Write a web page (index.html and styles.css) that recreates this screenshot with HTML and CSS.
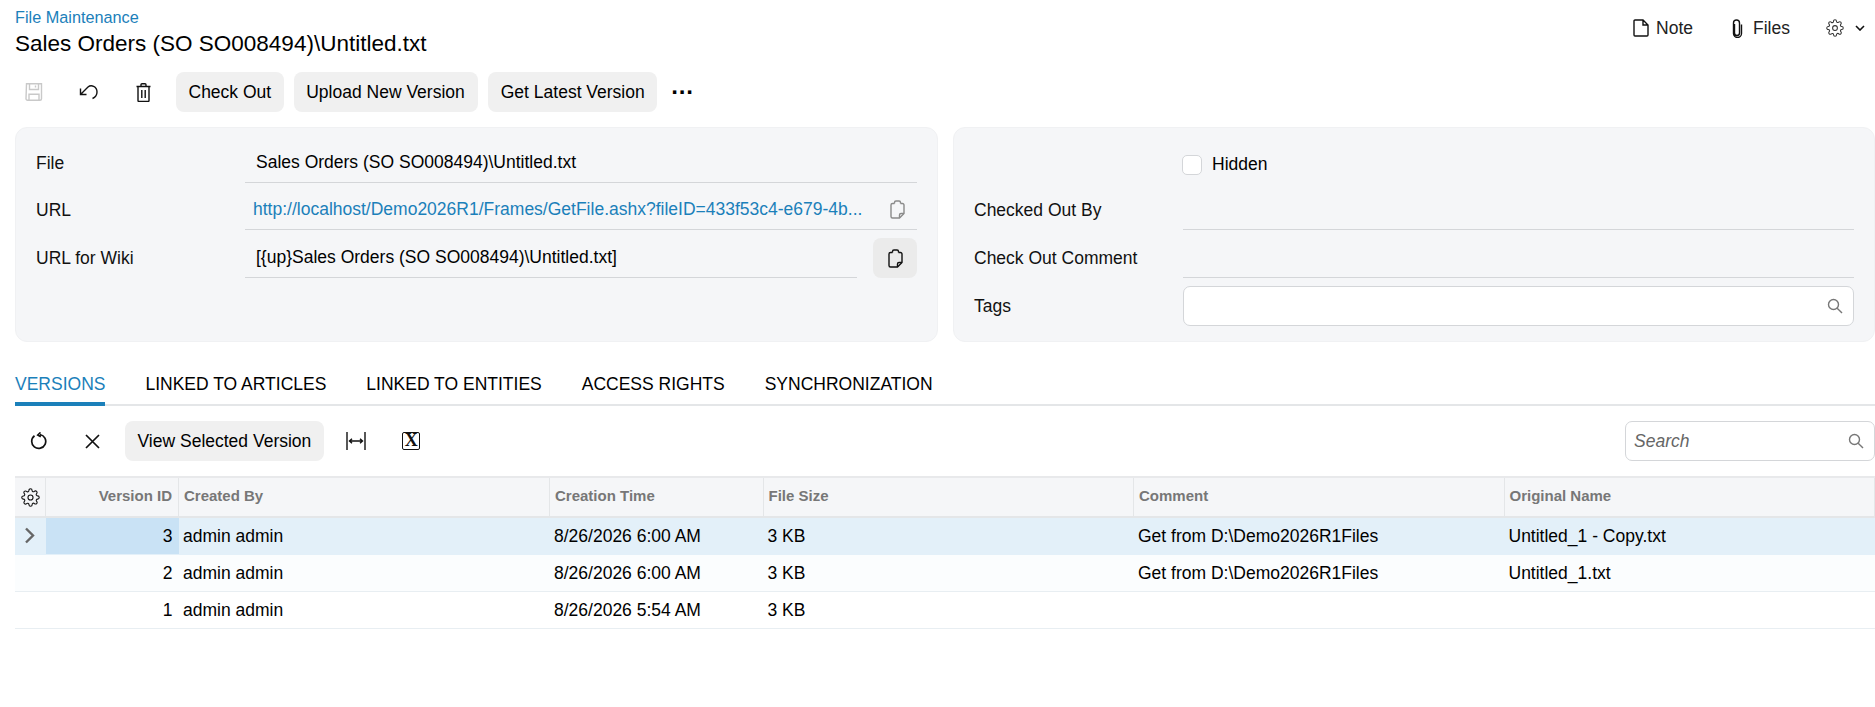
FILE: index.html
```html
<!DOCTYPE html>
<html lang="en">
<head>
  <meta charset="UTF-8">
  <title>File Maintenance</title>
  <link rel="stylesheet" href="styles.css">
</head>
<body>
  <svg class="defs" width="0" height="0">
    <symbol id="gear" viewBox="0 0 24 24">
      <circle cx="12" cy="12" r="3.2"/>
      <path d="M19.4 15a1.65 1.65 0 0 0 .33 1.82l.06.06a2 2 0 0 1 0 2.83 2 2 0 0 1-2.83 0l-.06-.06a1.65 1.65 0 0 0-1.82-.33 1.65 1.65 0 0 0-1 1.51V21a2 2 0 0 1-2 2 2 2 0 0 1-2-2v-.09A1.65 1.65 0 0 0 9 19.4a1.65 1.65 0 0 0-1.82.33l-.06.06a2 2 0 0 1-2.83 0 2 2 0 0 1 0-2.83l.06-.06a1.65 1.65 0 0 0 .33-1.82 1.65 1.65 0 0 0-1.51-1H3a2 2 0 0 1-2-2 2 2 0 0 1 2-2h.09A1.65 1.65 0 0 0 4.6 9a1.65 1.65 0 0 0-.33-1.82l-.06-.06a2 2 0 0 1 0-2.83 2 2 0 0 1 2.83 0l.06.06a1.65 1.65 0 0 0 1.82.33H9a1.65 1.65 0 0 0 1-1.51V3a2 2 0 0 1 2-2 2 2 0 0 1 2 2v.09a1.65 1.65 0 0 0 1 1.51 1.65 1.65 0 0 0 1.82-.33l.06-.06a2 2 0 0 1 2.83 0 2 2 0 0 1 0 2.83l-.06.06a1.65 1.65 0 0 0-.33 1.82V9a1.65 1.65 0 0 0 1.51 1H21a2 2 0 0 1 2 2 2 2 0 0 1-2 2h-.09a1.65 1.65 0 0 0-1.51 1z"/>
    </symbol>
    <symbol id="copy" viewBox="0 0 15 19">
      <path d="M4.5 3.5H2.5a1.5 1.5 0 0 0-1.5 1.5v11.5a1.5 1.5 0 0 0 1.5 1.5h7l4.500-4.500V5a1.500 1.500 0 0 0-1.500-1.500h-2"/>
      <path d="M4.500 3.500V2.500a1.500 1.500 0 0 1 1.500-1.500h3a1.500 1.500 0 0 1 1.500 1.500v1"/>
      <path d="M9.500 18v-3a1.500 1.500 0 0 1 1.500-1.500h3"/>
    </symbol>
    <symbol id="search" viewBox="0 0 16 16">
      <circle cx="6.500" cy="6.500" r="5"/>
      <path d="M10.200 10.200 15 15"/>
    </symbol>
  </svg>

  <header class="page-head">
    <div>
      <a class="crumb" href="#">File Maintenance</a>
      <h1 class="title">Sales Orders (SO SO008494)\Untitled.txt</h1>
    </div>
    <div class="head-links">
      <span class="head-link">
        <svg class="ico" width="16" height="18" viewBox="0 0 16 18"><path d="M1 2a1 1 0 0 1 1-1h8l5 5v10a1 1 0 0 1-1 1H2a1 1 0 0 1-1-1zM10 1v5h5"/></svg>
        Note
      </span>
      <span class="head-link files-link">
        <svg class="ico" width="12" height="19" viewBox="0 0 12 19"><path d="M3.500 5v9a2.500 2.500 0 0 0 5 0V4a3 3 0 0 0-6 0v10.500a4 4 0 0 0 8 0V5.500"/></svg>
        Files
      </span>
      <svg class="ico head-gear" width="18" height="18"><use href="#gear"/></svg>
      <svg class="ico head-chevron" width="10" height="6" viewBox="0 0 10 6"><path d="M1 1l4 4 4-4"/></svg>
    </div>
  </header>

  <div class="toolbar top-bar">
    <span class="icon-btn">
      <svg class="ico off" width="18" height="18" viewBox="0 0 18 18"><path d="M1.500.8h15v15a1.500 1.500 0 0 1-1.500 1.500H2.500a1.500 1.500 0 0 1-1.500-1.500zM4.500 1v5.500h9V1M4 17.200v-6h10v6M10.500 2.500v2"/></svg>
    </span>
    <span class="icon-btn">
      <svg class="ico" width="20" height="16" viewBox="0 0 20 16"><path d="M1.500 4.500v6h6M1.500 10.500 9 3c3-2.500 9-1 9 5 0 3-2 5.500-4.500 6.500"/></svg>
    </span>
    <span class="icon-btn">
      <svg class="ico" width="15" height="19" viewBox="0 0 15 19"><path d="M.5 3.500h14M5 3.500V1.800a1 1 0 0 1 1-1h3a1 1 0 0 1 1 1v1.700M2 3.500v14a1 1 0 0 0 1 1h9a1 1 0 0 0 1-1v-14M5.800 7v8M9.200 7v8"/></svg>
    </span>
    <button class="btn">Check Out</button>
    <button class="btn btn-wide">Upload New Version</button>
    <button class="btn">Get Latest Version</button>
    <span class="more">···</span>
  </div>

  <section class="forms">
    <div class="panel panel-left">
      <div class="row">
        <label class="lbl">File</label>
        <div class="val">Sales Orders (SO SO008494)\Untitled.txt</div>
      </div>
      <div class="row">
        <label class="lbl">URL</label>
        <div class="val val-link">
          <a href="#" class="link">http://localhost/Demo2026R1/Frames/GetFile.ashx?fileID=433f53c4-e679-4b...</a>
          <svg class="ico off-copy" width="15" height="19"><use href="#copy"/></svg>
        </div>
      </div>
      <div class="row">
        <label class="lbl">URL for Wiki</label>
        <div class="val">[{up}Sales Orders (SO SO008494)\Untitled.txt]</div>
        <span class="copy-btn"><svg class="ico" width="15" height="19"><use href="#copy"/></svg></span>
      </div>
    </div>

    <div class="panel panel-right">
      <div class="row">
        <label class="lbl"></label>
        <div class="check-line"><span class="check"></span>Hidden</div>
      </div>
      <div class="row">
        <label class="lbl">Checked Out By</label>
        <div class="val"></div>
      </div>
      <div class="row">
        <label class="lbl">Check Out Comment</label>
        <div class="val"></div>
      </div>
      <div class="row">
        <label class="lbl lbl-tags">Tags</label>
        <div class="input">
          <svg class="ico search-ico" width="16" height="16"><use href="#search"/></svg>
        </div>
      </div>
    </div>
  </section>

  <nav class="tabs">
    <a class="tab active" href="#">VERSIONS</a>
    <a class="tab" href="#">LINKED TO ARTICLES</a>
    <a class="tab" href="#">LINKED TO ENTITIES</a>
    <a class="tab" href="#">ACCESS RIGHTS</a>
    <a class="tab" href="#">SYNCHRONIZATION</a>
  </nav>

  <div class="toolbar grid-bar">
    <span class="icon-btn">
      <svg class="ico heavy" width="18" height="18" viewBox="0 0 18 18"><path d="M5.500 3.800a7 7 0 1 0 5.500-1.300M11.500.5 8.800 3l3 1.800"/></svg>
    </span>
    <span class="icon-btn">
      <svg class="ico heavy" width="15" height="15" viewBox="0 0 15 15"><path d="M1 1l13 13M14 1 1 14"/></svg>
    </span>
    <button class="btn">View Selected Version</button>
    <span class="icon-btn">
      <svg class="ico" width="20" height="18" viewBox="0 0 20 18"><path d="M1 0v18M19 0v18M3.500 9h13M6 6.800 3.500 9 6 11.200M14 6.800 16.500 9 14 11.200"/></svg>
    </span>
    <span class="icon-btn"><span class="xls">X</span></span>
    <div class="input search-box">
      <span class="search-hint">Search</span>
      <svg class="ico search-ico" width="16" height="16"><use href="#search"/></svg>
    </div>
  </div>

  <table class="grid">
    <colgroup>
      <col class="c-gear"><col class="c-id"><col class="c-by"><col class="c-time"><col class="c-size"><col class="c-comment"><col>
    </colgroup>
    <thead>
      <tr>
        <th class="cell-gear"><svg class="ico" width="19" height="19"><use href="#gear"/></svg></th>
        <th class="num">Version ID</th>
        <th>Created By</th>
        <th>Creation Time</th>
        <th>File Size</th>
        <th>Comment</th>
        <th>Original Name</th>
      </tr>
    </thead>
    <tbody>
      <tr class="current">
        <td class="cell-gear"><svg class="arrow" width="11" height="17" viewBox="0 0 11 17"><path d="M2 1.500 9 8.500 2 15.500"/></svg></td>
        <td class="num picked">3</td>
        <td>admin admin</td>
        <td>8/26/2026 6:00 AM</td>
        <td>3 KB</td>
        <td>Get from D:\Demo2026R1Files</td>
        <td>Untitled_1 - Copy.txt</td>
      </tr>
      <tr class="tinted">
        <td></td>
        <td class="num">2</td>
        <td>admin admin</td>
        <td>8/26/2026 6:00 AM</td>
        <td>3 KB</td>
        <td>Get from D:\Demo2026R1Files</td>
        <td>Untitled_1.txt</td>
      </tr>
      <tr>
        <td></td>
        <td class="num">1</td>
        <td>admin admin</td>
        <td>8/26/2026 5:54 AM</td>
        <td>3 KB</td>
        <td></td>
        <td></td>
      </tr>
    </tbody>
  </table>
</body>
</html>
```

FILE: styles.css
```css
* {
  box-sizing: border-box;
}
body {
  margin: 0;
  padding-left: 15px;
  background: white;
  color: #000;
  font-family: "Liberation Sans", Arial, sans-serif;
  font-size: 17.5px;
  overflow: hidden;
}
a {
  text-decoration: none;
  color: #000;
}
.defs {
  position: absolute;
}
.ico {
  display: block;
  fill: none;
  stroke: #111;
  stroke-width: 1.4;
}
.heavy {
  stroke-width: 1.7;
}
.off {
  stroke: #c9c9c9;
}
.off-copy {
  stroke: #8a8a8a;
}

/* header */
.page-head {
  display: flex;
  justify-content: space-between;
  height: 72px;
  padding-top: 8px;
}
.crumb {
  display: block;
  margin-bottom: 2px;
  color: #1b80ba;
  font-size: 16.25px;
  line-height: 19px;
}
.title {
  margin: 0;
  font-size: 22.500px;
  font-weight: normal;
  line-height: 30px;
}
.head-links {
  display: flex;
  align-items: center;
  height: 40px;
  padding-right: 10px;
}
.head-link {
  display: flex;
  align-items: center;
  gap: 7px;
  color: #222;
}
.files-link {
  margin-left: 38px;
  gap: 10px;
}
.head-gear {
  margin-left: 36px;
  stroke: #333;
}
.head-chevron {
  margin-left: 11px;
  stroke-width: 1.6;
}

/* toolbars */
.toolbar {
  display: flex;
  align-items: center;
  gap: 10px;
  height: 40px;
}
.top-bar {
  margin-left: -4px;
}
.grid-bar {
  margin-top: 15px;
}
.icon-btn {
  display: flex;
  align-items: center;
  justify-content: center;
  width: 45px;
  height: 40px;
}
.btn {
  height: 40px;
  padding: 0 12.500px;
  border: none;
  border-radius: 8px;
  background: #f0f0f0;
  color: #000;
  font: inherit;
}
.btn-wide {
  padding-right: 13.500px;
}
.more {
  margin-left: 4px;
  font-size: 24px;
  font-weight: bold;
  letter-spacing: -0.5px;
}

/* form panels */
.forms {
  display: grid;
  grid-template-columns: 923px 1fr;
  gap: 15px;
  margin-top: 15px;
}
.panel {
  display: grid;
  grid-template-rows: 47px 47px 48px 48px;
  height: 215px;
  padding: 8px 20px 0;
  border: 1px solid #f0f1f3;
  border-radius: 12px;
  background: #f5f6f8;
}
.row {
  display: flex;
  align-items: flex-end;
}
.lbl {
  flex: none;
  width: 209px;
  height: 38px;
  line-height: 37px;
  color: #111;
}
.val {
  flex: 1;
  height: 39px;
  padding-left: 11px;
  border-bottom: 1px solid #d4d6d9;
  line-height: 37px;
  white-space: nowrap;
}
.val-link {
  display: flex;
  align-items: center;
  justify-content: space-between;
  padding-left: 8px;
  padding-right: 12px;
  padding-bottom: 2px;
}
.link {
  color: #1b80ba;
}
.copy-btn {
  display: flex;
  align-items: center;
  justify-content: center;
  flex: none;
  width: 44px;
  height: 40px;
  margin-left: 16px;
  border-radius: 8px;
  background: #ebebeb;
}
.panel-right .val {
  padding-left: 0;
}
.check-line {
  display: flex;
  align-items: center;
  gap: 10px;
  height: 37px;
  margin-left: -1px;
}
.check {
  width: 20px;
  height: 20px;
  border: 1px solid #d4d6d9;
  border-radius: 5px;
  background: white;
}
.lbl-tags {
  height: 40px;
  line-height: 40px;
}
.input {
  display: flex;
  align-items: center;
  justify-content: flex-end;
  flex: 1;
  height: 40px;
  padding: 0 10px;
  border: 1px solid #d4d6d9;
  border-radius: 7px;
  background: white;
}
.search-ico {
  stroke: #777;
}
.search-box {
  flex: none;
  justify-content: space-between;
  width: 250px;
  margin-left: auto;
  padding-left: 8px;
}
.search-hint {
  color: #666;
  font-style: italic;
  line-height: 36px;
}

/* tabs */
.tabs {
  display: flex;
  gap: 40px;
  height: 46px;
  margin-top: 18px;
  border-bottom: 2px solid #e4e6e8;
}
.tab {
  height: 46px;
  line-height: 48px;
  border-bottom: 4px solid transparent;
  border-radius: 2px 2px 0 0;
}
.tab.active {
  color: #1b80ba;
  border-bottom-color: #1b80ba;
}

/* grid */
.grid {
  width: 1860px;
  margin-top: 15px;
  border-collapse: collapse;
  table-layout: fixed;
}
.c-gear {
  width: 30.500px;
}
.c-id {
  width: 133px;
}
.c-by {
  width: 371px;
}
.c-time {
  width: 213.500px;
}
.c-size {
  width: 370.500px;
}
.c-comment {
  width: 370.500px;
}
.grid th {
  height: 40px;
  padding: 0 5px 3px;
  border-top: 2px solid #e8e9eb;
  border-right: 1px solid #e4e6e8;
  border-bottom: 2px solid #e4e6e8;
  background: #f5f6f8;
  color: #777;
  font-size: 15px;
  text-align: left;
}
.grid td {
  height: 37px;
  padding: 1px 4.500px 0;
  border-bottom: 1px solid #e8eef2;
  white-space: nowrap;
}
.grid th.num,
.grid td.num {
  padding-right: 6px;
  text-align: right;
}
.grid .cell-gear {
  padding: 0 0 0 6px;
}
.arrow {
  display: block;
  margin-left: 3px;
  fill: none;
  stroke: #666;
  stroke-width: 2.4;
}
.current td {
  background: #e3f0f9;
  border-bottom-color: #e3f0f9;
}
.current td.picked {
  background: #c9e2f5;
}
.tinted td {
  background: #fbfdfe;
}
.xls {
  display: block;
  width: 18px;
  height: 18px;
  border: 1.5px solid #111;
  border-radius: 2px;
  color: #111;
  font-family: "Liberation Serif", serif;
  font-size: 18px;
  font-weight: bold;
  line-height: 15px;
  text-align: center;
}
```
